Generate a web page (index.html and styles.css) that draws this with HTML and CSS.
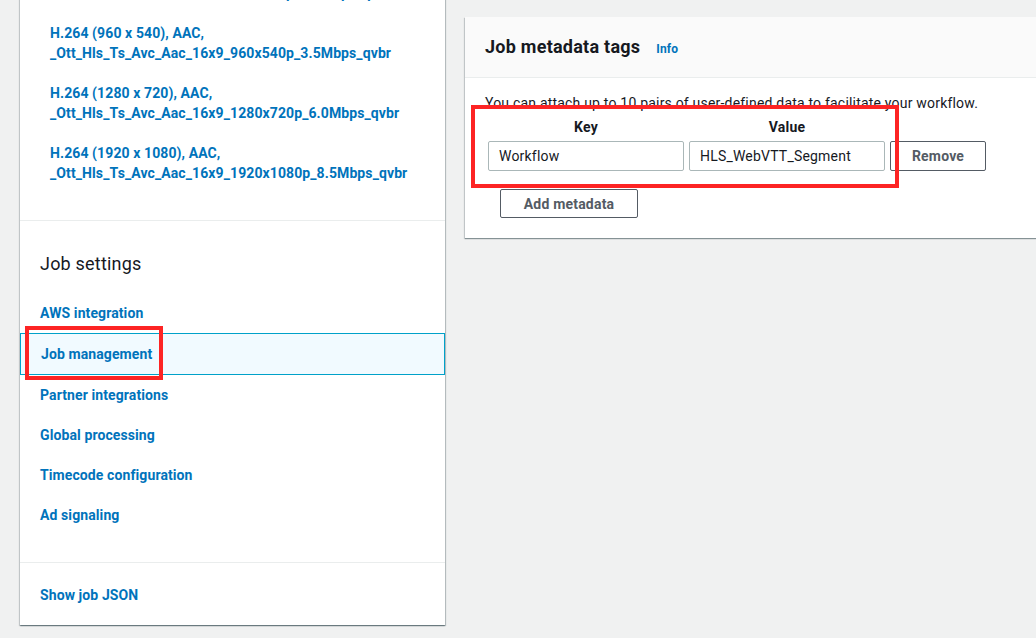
FILE: index.html
```html
<!DOCTYPE html>
<html>
<head>
<meta charset="utf-8">
<link rel="stylesheet" href="styles.css">
</head>
<body>
<div class="page">
  <aside class="sidebar">
    <ul class="outputs">
      <li><a>H.264 (640 x 360), AAC,<br>_Ott_Hls_Ts_Avc_Aac_16x9_640x360p_2.0Mbps_qvbr</a></li>
      <li><a>H.264 (960 x 540), AAC,<br>_Ott_Hls_Ts_Avc_Aac_16x9_960x540p_3.5Mbps_qvbr</a></li>
      <li><a>H.264 (1280 x 720), AAC,<br>_Ott_Hls_Ts_Avc_Aac_16x9_1280x720p_6.0Mbps_qvbr</a></li>
      <li><a>H.264 (1920 x 1080), AAC,<br>_Ott_Hls_Ts_Avc_Aac_16x9_1920x1080p_8.5Mbps_qvbr</a></li>
    </ul>
    <section class="settings">
      <h2 class="settings-title">Job settings</h2>
      <nav class="nav">
        <a class="nav-item">AWS integration</a>
        <a class="nav-item selected">Job management</a>
        <a class="nav-item">Partner integrations</a>
        <a class="nav-item">Global processing</a>
        <a class="nav-item">Timecode configuration</a>
        <a class="nav-item">Ad signaling</a>
      </nav>
    </section>
    <div class="json">
      <a class="json-link">Show job JSON</a>
    </div>
  </aside>

  <main class="panel">
    <header class="panel-header">
      <h2 class="panel-title">Job metadata tags</h2>
      <a class="info">Info</a>
    </header>
    <div class="panel-body">
      <p class="desc">You can attach up to 10 pairs of user-defined data to facilitate your workflow.</p>
      <div class="tags">
        <div class="tag-label">Key</div>
        <div class="tag-label">Value</div>
        <div></div>
        <div class="input">Workflow</div>
        <div class="input">HLS_WebVTT_Segment</div>
        <button class="btn">Remove</button>
      </div>
      <button class="btn add">Add metadata</button>
    </div>
  </main>
</div>
<div class="highlight hl-nav"></div>
<div class="highlight hl-tags"></div>
</body>
</html>
```

FILE: styles.css
```css
html, body {
  margin: 0;
  padding: 0;
  overflow: hidden;
}
body {
  width: 1036px;
  height: 638px;
  background: #f0f1f1;
  font-family: Roboto, "Liberation Sans", sans-serif;
  font-size: 14px;
  letter-spacing: 0.2px;
  color: #16191f;
  position: relative;
}
a { color: #0073bb; font-weight: 700; letter-spacing: 0.1px; }

.page {
  display: flex;
  align-items: flex-start;
  gap: 20px;
  padding-left: 20px;
}

/* Sidebar */
.sidebar {
  width: 425px;
  flex: none;
  background: #fff;
  margin-top: -37px;
  box-shadow: 0 1px 1px 0 rgba(0, 28, 36, 0.35), 1px 1px 1px 0 rgba(0, 28, 36, 0.2), -1px 1px 1px 0 rgba(0, 28, 36, 0.15);
}
.outputs {
  list-style: none;
  margin: 0;
  padding: 0 0 37px 30px;
  display: flex;
  flex-direction: column;
  gap: 20px;
  border-bottom: 1px solid #eaeded;
  line-height: 20px;
}
.settings {
  padding: 31px 0 27px;
  border-bottom: 1px solid #eaeded;
}
.settings-title {
  margin: 0 0 17px 20px;
  font-size: 18px;
  line-height: 24px;
  font-weight: 400;
  color: #16191f;
}
.nav {
  display: flex;
  flex-direction: column;
}
.nav-item {
  display: block;
  padding: 10px 20px;
  line-height: 20px;
}
.nav-item.selected {
  background: #f1faff;
  border: 1px solid #00a1c9;
}
.json {
  padding: 22px 20px 20px;
  line-height: 20px;
}

/* Main panel */
.panel {
  width: 620px;
  flex: none;
  margin-top: 17px;
  background: #fff;
  box-shadow: 0 1px 1px 0 rgba(0, 28, 36, 0.35), -1px 1px 1px 0 rgba(0, 28, 36, 0.15);
}
.panel-header {
  display: flex;
  align-items: baseline;
  gap: 16px;
  padding: 19px 20px;
  background: #fafafa;
  border-bottom: 1px solid #eaeded;
}
.panel-title {
  margin: 0;
  font-size: 18px;
  line-height: 22px;
  font-weight: 700;
  letter-spacing: 0.25px;
  color: #16191f;
}
.info {
  font-size: 12px;
}
.panel-body {
  padding: 15px 20px 20px;
}
.desc {
  margin: 0 0 4px;
  line-height: 20px;
}
.tags {
  display: grid;
  grid-template-columns: 196px 196px 96px;
  column-gap: 5px;
  row-gap: 4px;
  padding-left: 3px;
}
.tag-label {
  text-align: center;
  font-weight: 700;
  line-height: 20px;
}
.input {
  box-sizing: border-box;
  height: 30px;
  border: 1px solid #aab7b8;
  border-radius: 2px;
  padding: 0 10px;
  line-height: 28px;
  color: #16191f;
}
.btn {
  box-sizing: border-box;
  height: 30px;
  background: #fff;
  border: 1px solid #545b64;
  border-radius: 2px;
  font-family: inherit;
  font-size: 14px;
  font-weight: 700;
  letter-spacing: 0.2px;
  color: #545b64;
  padding: 0 20px;
}
.add {
  display: block;
  margin: 18px 0 0 15px;
  width: 138px;
  height: 29px;
  padding: 0;
}

/* Annotation boxes */
.highlight {
  position: absolute;
  box-sizing: border-box;
  border: 4px solid #fd2424;
}
.hl-nav {
  left: 25px;
  top: 326px;
  width: 138px;
  height: 54px;
}
.hl-tags {
  left: 471px;
  top: 105px;
  width: 428px;
  height: 83px;
}
```
